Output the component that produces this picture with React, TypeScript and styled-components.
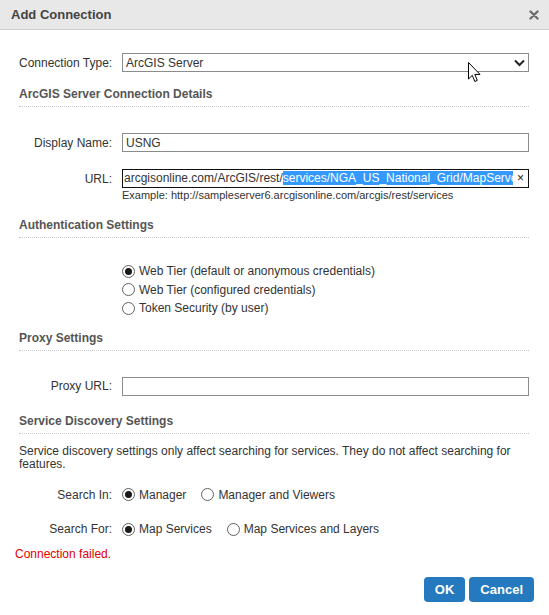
import styled, { createGlobalStyle } from 'styled-components';

const GlobalStyle = createGlobalStyle`
html, body {
  margin: 0;
  padding: 0;
  background: #ffffff;
}
body {
  font-family: "Liberation Sans", Arial, sans-serif;
  font-size: 12px;
  color: #333333;
}
`

const Dialog = styled.div`
position: relative;
width: 549px;
height: 615px;
background-color: #ffffff;
overflow: hidden;
`

const Header = styled.div`
height: 30px;
box-sizing: border-box;
background-color: #e8e8e8;
border-bottom: 1px solid #cfcfcf;
display: flex;
align-items: center;
justify-content: space-between;
padding: 0 10px 0 11px;
`

const Title = styled.span`
font-size: 13px;
font-weight: bold;
color: #444444;
`

const CloseButton = styled.span`
display: flex;
width: 10px;
height: 10px;
cursor: pointer;
`

const Body = styled.div`
padding: 0 20px 0 19px;
`

const Row = styled.div<{ $top: number }>`
display: grid;
grid-template-columns: 93px 1fr;
column-gap: 10px;
align-items: center;
margin-top: ${({ $top }) => $top}px;
`

const Label = styled.span`
text-align: right;
white-space: nowrap;
line-height: 14px;
`

const Field = styled.div<{ $focused?: boolean }>`
height: 19px;
box-sizing: border-box;
border: 1px solid ${({ $focused }) => ($focused ? '#111111' : '#8c8c8c')};
background-color: #ffffff;
display: flex;
align-items: center;
padding: 0 3px;
overflow: hidden;
white-space: nowrap;
min-width: 0;
`

const SelectBox = styled(Field)`
justify-content: space-between;
`

const UrlText = styled.span`
flex: 1;
min-width: 0;
overflow: hidden;
white-space: nowrap;
margin-left: -2px;
line-height: 15px;
`

const Selected = styled.span`
background-color: #3399ff;
color: #ffffff;
`

const ClearMark = styled.span`
flex: none;
font-size: 12px;
color: #222222;
padding: 0 1px 0 4px;
line-height: 15px;
`

const Hint = styled.div`
font-size: 11px;
line-height: 12px;
margin: 1px 0 0 103px;
color: #333333;
`

const SectionTitle = styled.div<{ $top: number }>`
margin-top: ${({ $top }) => $top}px;
font-weight: bold;
color: #555555;
line-height: 14px;
padding-bottom: 5px;
border-bottom: 1px dotted #c8c8c8;
`

const RadioList = styled.div<{ $top: number }>`
margin-top: ${({ $top }) => $top}px;
margin-left: 103px;
display: flex;
flex-direction: column;
`

const RadioGroup = styled.div`
display: flex;
align-items: center;
gap: 15px;
`

const RadioItem = styled.label`
display: flex;
align-items: center;
gap: 4px;
height: 18.5px;
line-height: 14px;
white-space: nowrap;
`

const RadioCircle = styled.span<{ $checked?: boolean }>`
width: 13px;
height: 13px;
box-sizing: border-box;
border-radius: 50%;
border: 1px solid #606060;
background-color: #ffffff;
display: flex;
align-items: center;
justify-content: center;
&::after {
  content: '';
  width: 7px;
  height: 7px;
  border-radius: 50%;
  background-color: ${({ $checked }) => ($checked ? '#1a1a1a' : 'transparent')};
}
`

const Paragraph = styled.p`
margin: 11px 0 0 0;
line-height: 13px;
`

const ErrorText = styled.div`
margin: 8px 0 0 -4px;
color: #e10000;
line-height: 14px;
`

const Footer = styled.div`
display: flex;
justify-content: flex-end;
gap: 4px;
margin: 16px -5px 0 0;
`

const Button = styled.button`
height: 25px;
padding: 0 11px;
border: none;
border-radius: 4px;
background-color: #2579be;
color: #ffffff;
font-family: "Liberation Sans", Arial, sans-serif;
font-size: 13px;
font-weight: bold;
cursor: pointer;
`

const Cursor = styled.svg`
position: absolute;
left: 468px;
top: 62px;
pointer-events: none;
`

function CloseIcon() {
  return (
    <svg width="10" height="10" viewBox="0 0 10 10">
      <path d="M1.5 1.5 L8.5 8.5 M8.5 1.5 L1.5 8.5" stroke="#6e6e6e" strokeWidth="2.4" strokeLinecap="round" />
    </svg>
  );
}

function Chevron() {
  return (
    <svg width="11" height="8" viewBox="0 0 11 8">
      <path d="M1 1.5 L5.5 6 L10 1.5" fill="none" stroke="#222222" strokeWidth="2" />
    </svg>
  );
}

function Radio({ checked, label }: { checked?: boolean; label: string }) {
  return (
    <RadioItem>
      <RadioCircle $checked={checked} />
      <span>{label}</span>
    </RadioItem>
  );
}

export default function App() {
  return (
    <Dialog>
      <GlobalStyle />
      <Header>
        <Title>Add Connection</Title>
        <CloseButton><CloseIcon /></CloseButton>
      </Header>
      <Body>
        <Row $top={23}>
          <Label>Connection Type:</Label>
          <SelectBox>
            <span>ArcGIS Server</span>
            <Chevron />
          </SelectBox>
        </Row>

        <SectionTitle $top={15}>ArcGIS Server Connection Details</SectionTitle>

        <Row $top={26}>
          <Label>Display Name:</Label>
          <Field>USNG</Field>
        </Row>
        <Row $top={17}>
          <Label>URL:</Label>
          <Field $focused>
            <UrlText>
              arcgisonline.com/ArcGIS/rest/<Selected>services/NGA_US_National_Grid/MapServer</Selected>
            </UrlText>
            <ClearMark>×</ClearMark>
          </Field>
        </Row>
        <Hint>Example: http://sampleserver6.arcgisonline.com/arcgis/rest/services</Hint>

        <SectionTitle $top={17}>Authentication Settings</SectionTitle>

        <RadioList $top={24}>
          <Radio checked label="Web Tier (default or anonymous credentials)" />
          <Radio label="Web Tier (configured credentials)" />
          <Radio label="Token Security (by user)" />
        </RadioList>

        <SectionTitle $top={13}>Proxy Settings</SectionTitle>

        <Row $top={26}>
          <Label>Proxy URL:</Label>
          <Field />
        </Row>

        <SectionTitle $top={18}>Service Discovery Settings</SectionTitle>

        <Paragraph>
          Service discovery settings only affect searching for services. They do not affect searching for features.
        </Paragraph>

        <Row $top={15}>
          <Label>Search In:</Label>
          <RadioGroup>
            <Radio checked label="Manager" />
            <Radio label="Manager and Viewers" />
          </RadioGroup>
        </Row>
        <Row $top={16}>
          <Label>Search For:</Label>
          <RadioGroup>
            <Radio checked label="Map Services" />
            <Radio label="Map Services and Layers" />
          </RadioGroup>
        </Row>

        <ErrorText>Connection failed.</ErrorText>

        <Footer>
          <Button>OK</Button>
          <Button>Cancel</Button>
        </Footer>
      </Body>

      <Cursor width="13" height="21" viewBox="0 0 13 21">
        <path d="M0.5 0.5 L0.5 17 L4.3 13.3 L6.8 19.5 L9.3 18.4 L6.8 12.4 L12 12.4 Z" fill="#ffffff" stroke="#000000" strokeWidth="1" strokeLinejoin="miter" />
      </Cursor>
    </Dialog>
  );
}
